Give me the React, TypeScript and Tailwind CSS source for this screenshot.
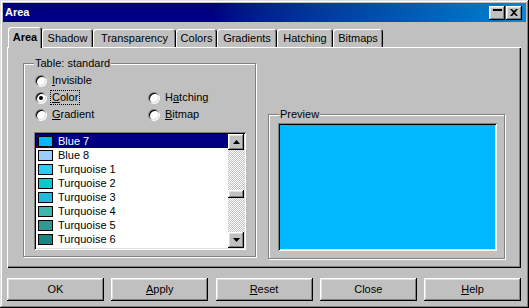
import React from "react";

type Swatch = {
    name: string,
    bg: string
}

const swatches: Swatch[] = [
    { name: 'Blue 7', bg: 'bg-[#00b8ff]' },
    { name: 'Blue 8', bg: 'bg-[#99ccff]' },
    { name: 'Turquoise 1', bg: 'bg-[#2ccbf6]' },
    { name: 'Turquoise 2', bg: 'bg-[#00cccc]' },
    { name: 'Turquoise 3', bg: 'bg-[#23b8dc]' },
    { name: 'Turquoise 4', bg: 'bg-[#3cb8ae]' },
    { name: 'Turquoise 5', bg: 'bg-[#2f9a94]' },
    { name: 'Turquoise 6', bg: 'bg-[#168781]' },
    { name: 'Turquoise 7', bg: 'bg-[#007a73]' },
];

const tabs = [
    { label: 'Area', w: 'w-[34px]' },
    { label: 'Shadow', w: 'w-[51px]' },
    { label: 'Transparency', w: 'w-[83px]' },
    { label: 'Colors', w: 'w-[41px]' },
    { label: 'Gradients', w: 'w-[60px]' },
    { label: 'Hatching', w: 'w-[56px]' },
    { label: 'Bitmaps', w: 'w-[50px]' },
];

const raised = "shadow-[inset_-1px_-1px_#000,inset_1px_1px_#fff,inset_-2px_-2px_#808080,inset_2px_2px_#dfdfdf]";
const sunken = "shadow-[inset_1px_1px_#808080,inset_-1px_-1px_#fff,inset_2px_2px_#000,inset_-2px_-2px_#dfdfdf]";
const etched = "border border-[#808080] shadow-[inset_1px_1px_#fff,1px_1px_#fff]";

const Mnemonic = ({ pre = '', u, post = '' }: { pre?: string, u: string, post?: string }) => (
    <>
        {pre}<span className="underline underline-offset-[1px]">{u}</span>{post}
    </>
);

const Radio = ({ checked = false, focus = false, children }: { checked?: boolean, focus?: boolean, children: React.ReactNode }) => (
    <div className="flex items-center gap-[3px] h-[17px]">
        <span className="w-[12px] h-[12px] rounded-full shadow-[inset_1px_1px_#808080,inset_-1px_-1px_#fff] flex items-center justify-center">
            <span className="w-[10px] h-[10px] rounded-full bg-white shadow-[inset_1px_1px_#000,inset_-1px_-1px_#dfdfdf] flex items-center justify-center">
                {checked && <span className="w-[4px] h-[4px] rounded-full bg-black" />}
            </span>
        </span>
        <span className={`px-[1px] leading-[13px] border ${focus ? 'border-dotted border-black' : 'border-transparent'}`}>
            {children}
        </span>
    </div>
);

const Arrow = ({ down = false }: { down?: boolean }) => (
    <svg width="7" height="4" viewBox="0 0 7 4">
        <path d={down ? "M0 0h7L3.5 4z" : "M0 4h7L3.5 0z"} fill="#000" />
    </svg>
);

const ColorList = () => (
    <div className={`ml-[10px] mt-[9px] w-[212px] h-[118px] bg-white p-[2px] flex ${sunken}`}>
        <div className="flex-1 overflow-hidden">
            {swatches.map((s, i) => (
                <div
                    key={s.name}
                    className={`h-[14px] flex items-center gap-[5px] pl-[2px] ${i === 0 ? 'bg-[#000080] text-white' : 'text-black'}`}
                >
                    <span className={`w-[15px] h-[11px] border border-black ${s.bg}`} />
                    <span className="leading-[14px]">{s.name}</span>
                </div>
            ))}
        </div>
        <div className="w-[16px] flex flex-col bg-[repeating-conic-gradient(#c0c0c0_0%_25%,#fff_0%_50%)] bg-[length:2px_2px]">
            <div className={`h-[16px] bg-[#c0c0c0] flex items-center justify-center ${raised}`}>
                <Arrow />
            </div>
            <div className="flex-1 pt-[40px]">
                <div className={`h-[8px] bg-[#c0c0c0] ${raised}`} />
            </div>
            <div className={`h-[16px] bg-[#c0c0c0] flex items-center justify-center ${raised}`}>
                <Arrow down />
            </div>
        </div>
    </div>
);

export default function App() {
    return (
        <div className="w-[529px] h-[308px] bg-[#c0c0c0] flex flex-col font-['Liberation_Sans',Arial,sans-serif] text-[11px] text-black shadow-[inset_-1px_-1px_#000,inset_1px_1px_#dfdfdf,inset_-2px_-2px_#808080,inset_2px_2px_#fff]">
            {/* title bar */}
            <div className="mx-[3px] mt-[3px] h-[19px] bg-gradient-to-r from-[#000080] from-40% to-[#1084d0] flex items-center pl-[2px] pr-[4px]">
                <span className="font-bold text-white leading-none">Area</span>
                <div className="ml-auto flex gap-[1px]">
                    <div className={`w-[16px] h-[14px] bg-[#c0c0c0] flex justify-center pt-[3px] ${raised}`}>
                        <span className="w-[9px] h-[2px] bg-black" />
                    </div>
                    <div className={`w-[16px] h-[14px] bg-[#c0c0c0] flex items-center justify-center ${raised}`}>
                        <svg width="8" height="7" viewBox="0 0 8 7">
                            <path d="M0 0h2l2 2 2-2h2L5 3.5 8 7H6L4 5 2 7H0l3-3.5z" fill="#000" />
                        </svg>
                    </div>
                </div>
            </div>

            {/* tabs */}
            <div className="ml-[8px] mt-[5px] flex items-end">
                {tabs.map((t, i) => (
                    <div
                        key={t.label}
                        className={`${t.w} flex items-center justify-center rounded-t-[3px] shadow-[inset_1px_1px_#fff,inset_-1px_0_#000,inset_-2px_0_#808080] ${i === 0 ? 'h-[21px] -mb-[1px] pb-[1px] relative z-10 bg-[#c0c0c0] font-bold' : 'h-[18px]'}`}
                    >
                        {t.label}
                    </div>
                ))}
            </div>

            {/* tab page */}
            <div className={`ml-[7px] w-[514px] h-[221px] pt-[16px] pl-[16px] flex items-start gap-[12px] shadow-[inset_1px_1px_#fff,inset_-1px_-1px_#000,inset_-2px_-2px_#808080]`}>
                <div className={`w-[233px] h-[194px] flex flex-col ${etched}`}>
                    <span className="self-start ml-[10px] -mt-[7px] px-[1px] h-[13px] leading-[13px] bg-[#c0c0c0]">Table: standard</span>
                    <div className="mt-[2px] ml-[11px] grid grid-cols-[113px_1fr]">
                        <Radio><Mnemonic u="I" post="nvisible" /></Radio>
                        <div />
                        <Radio checked focus><Mnemonic u="C" post="olor" /></Radio>
                        <Radio><Mnemonic pre="H" u="a" post="tching" /></Radio>
                        <Radio><Mnemonic u="G" post="radient" /></Radio>
                        <Radio><Mnemonic u="B" post="itmap" /></Radio>
                    </div>
                    <ColorList />
                </div>

                <div className={`mt-[51px] w-[237px] h-[145px] flex flex-col ${etched}`}>
                    <span className="self-start ml-[10px] -mt-[7px] px-[1px] h-[13px] leading-[13px] bg-[#c0c0c0]">Preview</span>
                    <div className={`ml-[9px] mt-[2px] w-[219px] h-[128px] bg-[#00b8ff] ${sunken}`} />
                </div>
            </div>

            {/* buttons */}
            <div className="ml-[7px] mt-[10px] w-[514px] flex justify-between">
                {[
                    <>OK</>,
                    <Mnemonic u="A" post="pply" />,
                    <Mnemonic u="R" post="eset" />,
                    <>Close</>,
                    <Mnemonic u="H" post="elp" />,
                ].map((label, i) => (
                    <button
                        key={i}
                        className={`w-[97px] h-[23px] bg-[#c0c0c0] flex items-center justify-center ${raised}`}
                    >
                        {label}
                    </button>
                ))}
            </div>
        </div>
    );
}
